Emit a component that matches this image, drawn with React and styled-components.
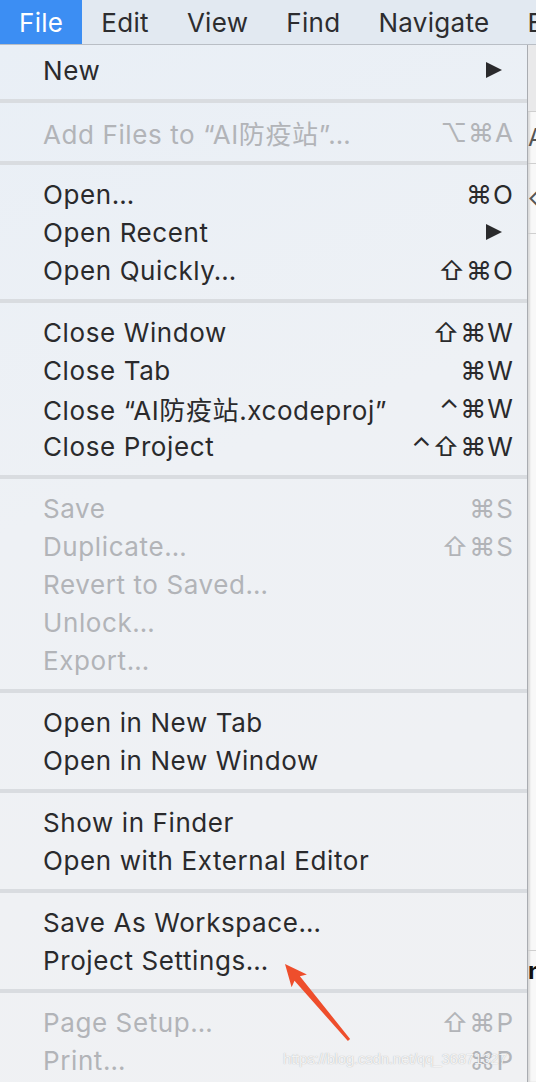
import styled, { createGlobalStyle } from "styled-components";

const GlobalStyle = createGlobalStyle`
  html, body {
    margin: 0;
    padding: 0;
    background: #f4f4f5;
  }
  * { box-sizing: border-box; }
`;

const Screen = styled.div`
  position: relative;
  width: 536px;
  height: 1082px;
  overflow: hidden;
  font-family: "Inter", "Noto Sans CJK SC", "DejaVu Sans", sans-serif;
  color: #2a2a2c;
`;

const MenuBar = styled.div`
  display: flex;
  height: 45px;
  background: #e2e9f1;
  border-bottom: 1px solid #b9bec5;
  white-space: nowrap;
`;

const BarTitle = styled.div`
  display: flex;
  align-items: center;
  height: 44px;
  padding: 0 19px;
  font-size: 26px;
  letter-spacing: 0.3px;
  color: ${(p) => (p.$active ? "#ffffff" : "#2d2d2f")};
  background: ${(p) => (p.$active ? "#3c8ef3" : "transparent")};
`;

const Body = styled.div`
  display: flex;
  height: 1037px;
`;

const Menu = styled.div`
  width: 528px;
  flex-shrink: 0;
  padding-top: 6px;
  background: linear-gradient(160deg, #e9eff6 0%, #eef1f5 40%, #f0f1f3 100%);
  border-right: 1px solid #a9acb1;
`;

const Group = styled.div`
  display: flex;
  flex-direction: column;
`;

const Separator = styled.div`
  height: 4px;
  margin: 10px 0;
  background: #d9dce0;
`;

const Item = styled.div`
  display: flex;
  align-items: center;
  height: 38px;
  padding: 0 13px 0 43px;
  font-size: 26px;
  letter-spacing: 0.6px;
  white-space: nowrap;
  color: ${(p) => (p.$disabled ? "#b2b4b8" : "#2a2a2c")};
`;

const Label = styled.span`
  flex: 1;
`;

const Shortcut = styled.span`
  font-family: "Inter", "DejaVu Sans", sans-serif;
  letter-spacing: 1px;
`;

const SubArrow = styled.span`
  width: 0;
  height: 0;
  margin-right: 12px;
  border-top: 8.5px solid transparent;
  border-bottom: 8.5px solid transparent;
  border-left: 16px solid #2a2a2c;
`;

const Backdrop = styled.div`
  flex: 1;
  display: flex;
  flex-direction: column;
  background: #f8f8f8;
  box-shadow: inset 2px 0 2px rgba(0, 0, 0, 0.12);
`;

const Cell = styled.div`
  height: ${(p) => p.$h}px;
  flex-shrink: 0;
  border-bottom: ${(p) => (p.$line ? "1px solid #cfcfcf" : "none")};
  background: ${(p) => p.$bg || "transparent"};
  font-size: 24px;
  font-weight: ${(p) => (p.$bold ? 700 : 400)};
  color: ${(p) => (p.$bold ? "#111" : "#555")};
  line-height: ${(p) => p.$h}px;
  white-space: nowrap;
  overflow: hidden;
`;

const Overlay = styled.svg`
  position: absolute;
  left: 0;
  top: 0;
  pointer-events: none;
`;

const Watermark = styled.div`
  position: absolute;
  left: 283px;
  top: 1050px;
  font-family: "Liberation Sans", sans-serif;
  font-size: 15px;
  letter-spacing: -0.2px;
  color: rgba(255, 255, 255, 0.85);
  text-shadow: 0 0 1px rgba(120, 120, 120, 0.6);
  pointer-events: none;
`;

const titles = [
  { t: "File", active: true },
  { t: "Edit" },
  { t: "View" },
  { t: "Find" },
  { t: "Navigate" },
  { t: "Editor" },
];

const groups = [
  [{ l: "New", sub: true }],
  [{ l: "Add Files to “AI防疫站”…", k: "⌥⌘A", d: true }],
  [
    { l: "Open…", k: "⌘O" },
    { l: "Open Recent", sub: true },
    { l: "Open Quickly…", k: "⇧⌘O" },
  ],
  [
    { l: "Close Window", k: "⇧⌘W" },
    { l: "Close Tab", k: "⌘W" },
    { l: "Close “AI防疫站.xcodeproj”", k: "⌃⌘W" },
    { l: "Close Project", k: "⌃⇧⌘W" },
  ],
  [
    { l: "Save", k: "⌘S", d: true },
    { l: "Duplicate…", k: "⇧⌘S", d: true },
    { l: "Revert to Saved…", d: true },
    { l: "Unlock…", d: true },
    { l: "Export…", d: true },
  ],
  [{ l: "Open in New Tab" }, { l: "Open in New Window" }],
  [{ l: "Show in Finder" }, { l: "Open with External Editor" }],
  [{ l: "Save As Workspace…" }, { l: "Project Settings…" }],
  [
    { l: "Page Setup…", k: "⇧⌘P", d: true },
    { l: "Print…", k: "⌘P", d: true },
  ],
];

const strip = [
  { h: 67, line: true, bg: "#e9e9ea" },
  { h: 52, line: true, t: "A" },
  { h: 70, line: true, t: "◇" },
  { h: 347 },
  { h: 370, line: true },
  { h: 40, t: "nt", bold: true },
  { h: 91 },
];

export default function App() {
  return (
    <Screen>
      <GlobalStyle />
      <MenuBar>
        {titles.map((m) => (
          <BarTitle key={m.t} $active={m.active}>
            {m.t}
          </BarTitle>
        ))}
      </MenuBar>
      <Body>
        <Menu>
          {groups.map((g, i) => (
            <div key={i}>
              {i > 0 && <Separator />}
              <Group>
                {g.map((it) => (
                  <Item key={it.l} $disabled={it.d}>
                    <Label>{it.l}</Label>
                    {it.k && <Shortcut>{it.k}</Shortcut>}
                    {it.sub && <SubArrow />}
                  </Item>
                ))}
              </Group>
            </div>
          ))}
        </Menu>
        <Backdrop>
          {strip.map((c, i) => (
            <Cell key={i} $h={c.h} $line={c.line} $bg={c.bg} $bold={c.bold}>
              {c.t}
            </Cell>
          ))}
        </Backdrop>
      </Body>
      <Overlay width="536" height="1082" viewBox="0 0 536 1082">
        <polygon
          points="285,964 306.9,974.4 299.9,976.2 350.1,1039 347.9,1041 294.5,980.8 291.6,987.2"
          fill="#ee4e2c"
        />
      </Overlay>
      <Watermark>https://blog.csdn.net/qq_36871327</Watermark>
    </Screen>
  );
}
